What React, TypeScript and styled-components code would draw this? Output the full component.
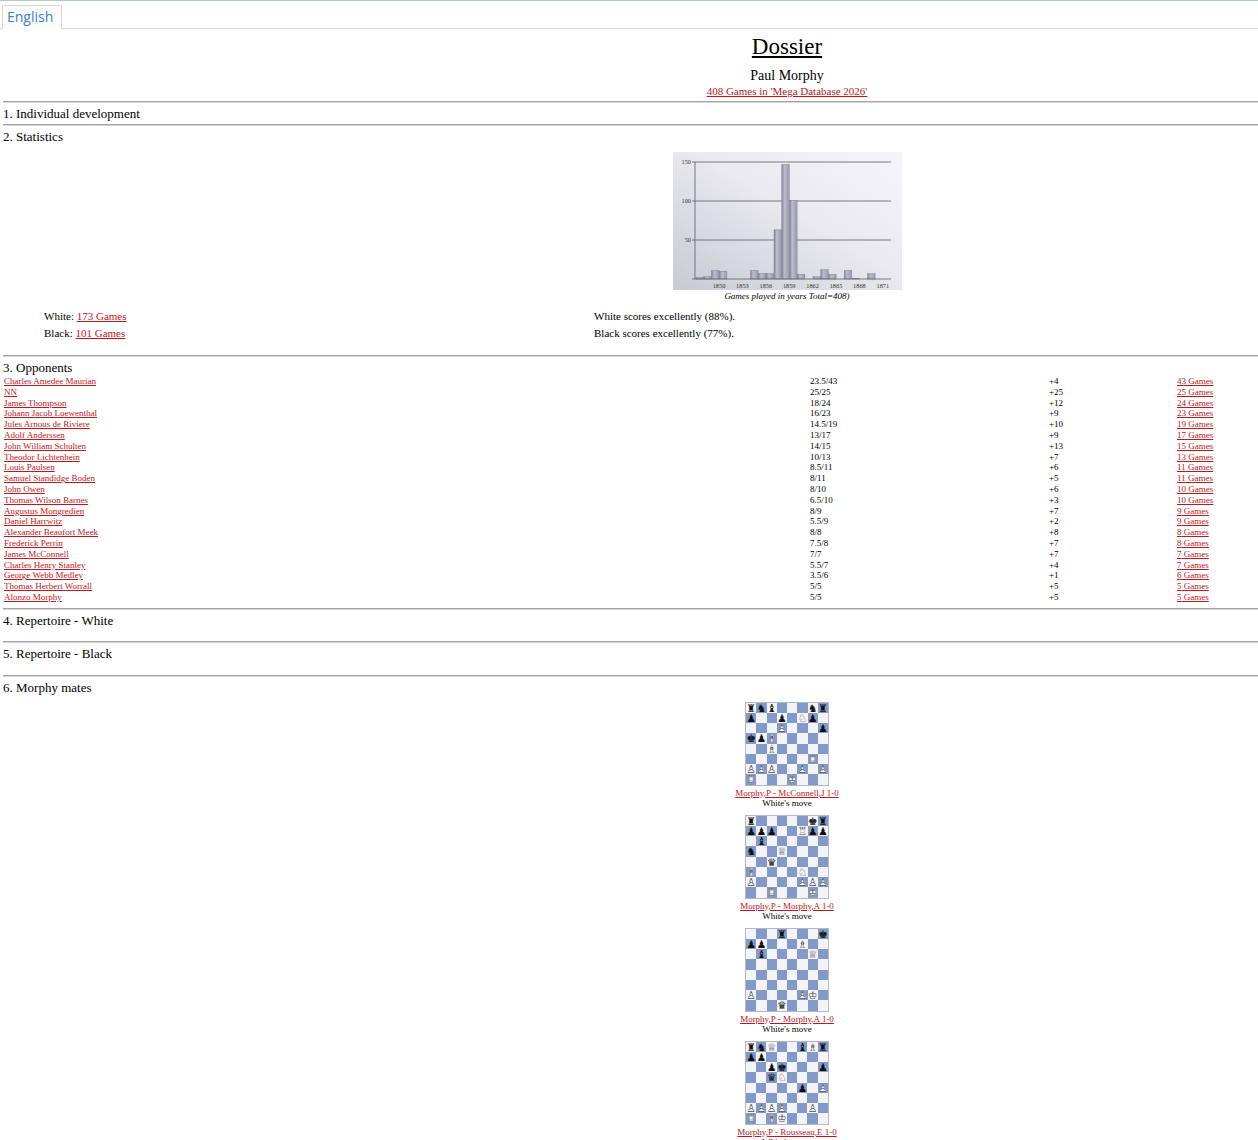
import React from "react";
import styled, { createGlobalStyle } from "styled-components";

const GlobalStyle = createGlobalStyle`
  html, body {
    margin: 0;
    padding: 0;
    overflow: hidden;
    background: #fff;
  }
  body {
    font-family: "Liberation Serif", "Times New Roman", serif;
    color: #000;
  }
`;

const TabBar = styled.div`
  width: 1600px;
  border-top: 1px solid #b7c7d8;
  border-bottom: 1px solid #d9d9d9;
  height: 27px;
  display: flex;
  align-items: flex-end;
  padding-left: 2px;
`;

const Tab = styled.div`
  height: 24px;
  box-sizing: border-box;
  padding: 0 8px 0 4px;
  border: 1px solid #d8d8d8;
  border-bottom: none;
  background: #fcfcfc;
  margin-bottom: -1px;
  font-family: "Open Sans", "Noto Sans", sans-serif;
  font-size: 14px;
  line-height: 22px;
  color: #3a7fd8;
`;

const Page = styled.div`
  width: 1568px;
  padding-left: 3px;
`;

const Header = styled.div`
  display: flex;
  flex-direction: column;
  align-items: center;
  padding-bottom: 3px;
`;

const Title = styled.div`
  margin-top: 5px;
  font-size: 23px;
  line-height: 26px;
  text-decoration: underline;
  text-underline-offset: 2px;
`;

const Name = styled.div`
  margin-top: 8px;
  font-size: 14px;
  line-height: 16px;
`;

const Link = styled.a<{ $size?: number }>`
  color: #c0161c;
  font-size: ${(p) => p.$size ?? 11}px;
  text-decoration: underline;
  cursor: pointer;
`;

const HeaderLink = styled(Link)`
  line-height: 14px;
`;

const Rule = styled.hr`
  margin: 0;
  height: 0;
  border: 0;
  border-top: 1px solid #a3a3a3;
  border-bottom: 1px solid #d6d6d6;
`;

const SectionTitle = styled.div<{ $bottom?: number }>`
  font-size: 13px;
  line-height: 15px;
  padding-top: 3px;
  padding-bottom: ${(p) => p.$bottom ?? 3}px;
`;

const Spacer = styled.div<{ $h: number }>`
  height: ${(p) => p.$h}px;
`;

const ChartBox = styled.div`
  display: flex;
  flex-direction: column;
  align-items: center;
  margin-top: 5px;
`;

const Caption = styled.div`
  margin-top: 1px;
  font-size: 9px;
  line-height: 10px;
  font-style: italic;
`;

const StatsGrid = styled.div`
  display: grid;
  grid-template-columns: 550px 1fr;
  padding-left: 41px;
  margin-top: 6.5px;
  margin-bottom: 13.5px;
  font-size: 11px;
  grid-auto-rows: 17px;
  align-items: center;
`;

const OppGrid = styled.div`
  display: grid;
  grid-template-columns: 806px 239px 128px 1fr;
  padding-left: 1px;
  margin-bottom: 5px;
  font-size: 9px;
  grid-auto-rows: 10.8px;
  line-height: 10.8px;
  white-space: nowrap;
`;

const Mates = styled.div`
  display: flex;
  flex-direction: column;
  align-items: center;
  margin-top: 4px;
`;

const MateItem = styled.div`
  display: flex;
  flex-direction: column;
  align-items: center;
  margin-bottom: 7px;
`;

const Board = styled.div`
  display: grid;
  grid-template-columns: repeat(8, 10.25px);
  grid-auto-rows: 10.25px;
  border: 1px solid #b5b8c2;
`;

const Square = styled.div<{ $dark: boolean }>`
  background: ${(p) => (p.$dark ? "#8299c9" : "#f3f4f7")};
  display: flex;
  align-items: center;
  justify-content: center;
  font-family: "DejaVu Sans", sans-serif;
  font-size: 10.5px;
  line-height: 1;
  overflow: hidden;
`;

const PieceWrap = styled.span`
  position: relative;
  display: inline-block;
`;

const PieceFill = styled.span<{ $white: boolean }>`
  color: ${(p) => (p.$white ? "#f4f4f4" : "#111")};
`;

const PieceOutline = styled.span`
  position: absolute;
  left: 0;
  top: 0;
  color: #4a4a4a;
`;

const MateLine = styled.div`
  font-size: 9px;
  line-height: 10px;
`;

const BoardCaption = styled(MateLine)`
  margin-top: 2px;
`;

const FILLED: Record<string, string> = {
  k: "\u265A",
  q: "\u265B",
  r: "\u265C",
  b: "\u265D",
  n: "\u265E",
  p: "\u265F\uFE0E",
};

const OUTLINE: Record<string, string> = {
  k: "\u2654",
  q: "\u2655",
  r: "\u2656",
  b: "\u2657",
  n: "\u2658",
  p: "\u2659",
};

const parseFen = (fen: string) =>
  fen.split("/").map((row) => {
    const cells: string[] = [];
    for (const ch of row) {
      if (/\d/.test(ch)) {
        for (let i = 0; i < Number(ch); i++) cells.push("");
      } else cells.push(ch);
    }
    return cells;
  });

const Piece = ({ code }: { code: string }) => {
  const white = code === code.toUpperCase();
  const kind = code.toLowerCase();
  return (
    <PieceWrap>
      <PieceFill $white={white}>{FILLED[kind]}</PieceFill>
      {white && <PieceOutline>{OUTLINE[kind]}</PieceOutline>}
    </PieceWrap>
  );
};

const ChessBoard = ({ fen }: { fen: string }) => (
  <Board>
    {parseFen(fen).map((row, r) =>
      row.map((cell, c) => (
        <Square key={`${r}-${c}`} $dark={(r + c) % 2 === 1}>
          {cell && <Piece code={cell} />}
        </Square>
      ))
    )}
  </Board>
);

const bars = [2, 3, 11, 10, 0, 0, 0, 11, 7, 7, 63, 147, 101, 6, 0, 3, 12, 6, 0, 11, 1, 0, 7, 0, 0];
const years = ["1850", "1853", "1856", "1859", "1862", "1865", "1868", "1871"];

const Chart = () => (
  <svg width="229" height="138" viewBox="0 0 229 138">
    <defs>
      <linearGradient id="bg" x1="0" y1="1" x2="1" y2="0">
        <stop offset="0" stopColor="#c9c9d3" />
        <stop offset="0.55" stopColor="#e9e9ef" />
        <stop offset="1" stopColor="#f5f5f9" />
      </linearGradient>
      <linearGradient id="bar" x1="0" y1="0" x2="1" y2="0">
        <stop offset="0" stopColor="#83839a" />
        <stop offset="0.35" stopColor="#bcbccb" />
        <stop offset="1" stopColor="#9a9aae" />
      </linearGradient>
    </defs>
    <rect x="0" y="0" width="229" height="138" fill="url(#bg)" />
    {[
      [10, "150"],
      [49, "100"],
      [88, "50"],
    ].map(([y, label]) => (
      <g key={label as string}>
        <line x1="19" x2="218" y1={y} y2={y} stroke="#5a5a62" strokeWidth="0.8" />
        <text x="18" y={(y as number) + 2.3} fontSize="6.3" textAnchor="end" fill="#333" fontFamily="Liberation Serif, serif">
          {label}
        </text>
      </g>
    ))}
    {bars.map((v, i) =>
      v > 0 ? (
        <rect
          key={i}
          x={23 + i * 7.8}
          y={127 - v * 0.78}
          width="7.5"
          height={v * 0.78}
          fill="url(#bar)"
          stroke="#77778a"
          strokeWidth="0.4"
        />
      ) : null
    )}
    <line x1="22" x2="22" y1="10" y2="127" stroke="#5a5a62" strokeWidth="0.8" />
    <line x1="19" x2="218" y1="127" y2="127" stroke="#5a5a62" strokeWidth="0.8" />
    {years.map((y, k) => (
      <text key={y} x={46 + k * 23.4} y="136" fontSize="6.3" textAnchor="middle" fill="#333" fontFamily="Liberation Serif, serif">
        {y}
      </text>
    ))}
  </svg>
);

const opponents: [string, string, string, number][] = [
  ["Charles Amedee Maurian", "23.5/43", "+4", 43],
  ["NN", "25/25", "+25", 25],
  ["James Thompson", "18/24", "+12", 24],
  ["Johann Jacob Loewenthal", "16/23", "+9", 23],
  ["Jules Arnous de Riviere", "14.5/19", "+10", 19],
  ["Adolf Anderssen", "13/17", "+9", 17],
  ["John William Schulten", "14/15", "+13", 15],
  ["Theodor Lichtenhein", "10/13", "+7", 13],
  ["Louis Paulsen", "8.5/11", "+6", 11],
  ["Samuel Standidge Boden", "8/11", "+5", 11],
  ["John Owen", "8/10", "+6", 10],
  ["Thomas Wilson Barnes", "6.5/10", "+3", 10],
  ["Augustus Mongredien", "8/9", "+7", 9],
  ["Daniel Harrwitz", "5.5/9", "+2", 9],
  ["Alexander Beaufort Meek", "8/8", "+8", 8],
  ["Frederick Perrin", "7.5/8", "+7", 8],
  ["James McConnell", "7/7", "+7", 7],
  ["Charles Henry Stanley", "5.5/7", "+4", 7],
  ["George Webb Medley", "3.5/6", "+1", 6],
  ["Thomas Herbert Worrall", "5/5", "+5", 5],
  ["Alonzo Morphy", "5/5", "+5", 5],
];

const mates = [
  { fen: "rnb3nr/p2p1Np1/3P3p/kpB5/2B5/6R1/PPP2P1P/R3K3", game: "Morphy,P - McConnell,J 1-0" },
  { fen: "r5kr/ppp2Rpp/1b6/n2Q4/2q5/B4N2/P4PPP/2R3K1", game: "Morphy,P - Morphy,A 1-0" },
  { fen: "3r3k/pp3B2/1b4Q1/8/8/8/P4PK1/3q4", game: "Morphy,P - Morphy,A 1-0" },
  { fen: "rnQ2bBr/pp6/2pk3p/2qN4/5p1P/8/PPPP2P1/R1BK4", game: "Morphy,P - Rousseau,E 1-0" },
];

export default function App() {
  return (
    <>
      <GlobalStyle />
      <TabBar>
        <Tab>English</Tab>
      </TabBar>
      <Page>
        <Header>
          <Title>Dossier</Title>
          <Name>Paul Morphy</Name>
          <HeaderLink>408 Games in 'Mega Database 2026'</HeaderLink>
        </Header>
        <Rule />
        <SectionTitle>1. Individual development</SectionTitle>
        <Rule />
        <SectionTitle>2. Statistics</SectionTitle>
        <ChartBox>
          <Chart />
          <Caption>Games played in years Total=408)</Caption>
        </ChartBox>
        <StatsGrid>
          <div>
            White: <Link>173 Games</Link>
          </div>
          <div>White scores excellently (88%).</div>
          <div>
            Black: <Link>101 Games</Link>
          </div>
          <div>Black scores excellently (77%).</div>
        </StatsGrid>
        <Rule />
        <SectionTitle $bottom={1}>3. Opponents</SectionTitle>
        <OppGrid>
          {opponents.map(([name, score, diff, games]) => (
            <React.Fragment key={name}>
              <div>
                <Link $size={9}>{name}</Link>
              </div>
              <div>{score}</div>
              <div>{diff}</div>
              <div>
                <Link $size={9}>{games} Games</Link>
              </div>
            </React.Fragment>
          ))}
        </OppGrid>
        <Rule />
        <SectionTitle>4. Repertoire - White</SectionTitle>
        <Spacer $h={10} />
        <Rule />
        <SectionTitle>5. Repertoire - Black</SectionTitle>
        <Spacer $h={11} />
        <Rule />
        <SectionTitle>6. Morphy mates</SectionTitle>
        <Mates>
          {mates.map((m, i) => (
            <MateItem key={i}>
              <ChessBoard fen={m.fen} />
              <BoardCaption>
                <Link $size={9}>{m.game}</Link>
              </BoardCaption>
              <MateLine>White's move</MateLine>
            </MateItem>
          ))}
        </Mates>
      </Page>
    </>
  );
}
